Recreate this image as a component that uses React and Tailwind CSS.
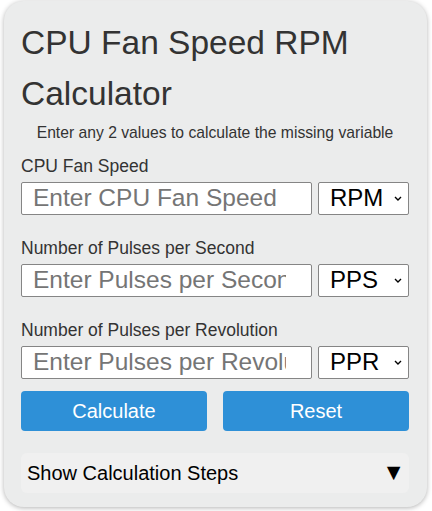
import { useState } from 'react';

const fields = [
  { id: 'speed', label: 'CPU Fan Speed', placeholder: 'Enter CPU Fan Speed', unit: 'RPM' },
  { id: 'pps', label: 'Number of Pulses per Second', placeholder: 'Enter Pulses per Second', unit: 'PPS' },
  { id: 'ppr', label: 'Number of Pulses per Revolution', placeholder: 'Enter Pulses per Revolution', unit: 'PPR' },
];

function Chevron() {
  return (
    <svg width="8" height="5" viewBox="0 0 8 5" className="pointer-events-none absolute right-[7px] top-[14px]">
      <path d="M1 1l3 3 3-3" fill="none" stroke="#000" strokeWidth="1.4" />
    </svg>
  );
}

function Field({ f, value, onChange }) {
  return (
    <div className="flex flex-col">
      <label className="text-[17.5px] leading-[20px] text-[#333]">{f.label}</label>
      <div className="mt-[6px] flex h-[33px] gap-[6px]">
        <input
          value={value}
          onChange={e => onChange(e.target.value)}
          placeholder={f.placeholder}
          className="block h-[33px] w-[291px] min-w-0 rounded-[2px] border border-[#858585] bg-white pl-[11px] pr-[25px] text-[24.5px] text-black outline-none placeholder:text-[#757575]"
        />
        <div className="relative flex-1">
          <select className="block h-[33px] w-full appearance-none rounded-[2px] border border-[#858585] bg-white py-0 pl-[11px] text-[24px] leading-[24px] text-black outline-none">
            <option>{f.unit}</option>
          </select>
          <Chevron />
        </div>
      </div>
    </div>
  );
}

export default function App() {
  const [vals, setVals] = useState({ speed: '', pps: '', ppr: '' });
  const [open, setOpen] = useState(false);

  return (
    <div className="min-h-[511px] bg-white font-['Liberation_Sans',Arial,sans-serif]">
      <div className="ml-[4px] mt-px h-[506px] w-[423px] rounded-[20px] bg-[#ebecec] pl-[17px] pr-[18px] pt-[16px] shadow-[0_1px_5px_rgba(0,0,0,0.3)]">
        <h1 className="text-[33.5px] leading-[51px] text-[#333]">CPU Fan Speed RPM Calculator</h1>
        <p className="mt-[5px] text-center text-[15.7px] leading-[18px] text-[#333]">
          Enter any 2 values to calculate the missing variable
        </p>

        <div className="mt-[13.5px] flex flex-col gap-[23px]">
          {fields.map(f => (
            <Field key={f.id} f={f} value={vals[f.id]} onChange={v => setVals(s => ({ ...s, [f.id]: v }))} />
          ))}
        </div>

        <div className="mt-[12px] flex gap-[16px]">
          <button className="h-[40px] flex-1 rounded-[4px] bg-[#2e90d7] text-[20px] text-white">Calculate</button>
          <button
            onClick={() => setVals({ speed: '', pps: '', ppr: '' })}
            className="h-[40px] flex-1 rounded-[4px] bg-[#2e90d7] text-[20px] text-white"
          >
            Reset
          </button>
        </div>

        <button
          onClick={() => setOpen(o => !o)}
          className="mt-[22px] flex h-[40px] w-full items-center justify-between rounded-[6px] bg-[#f0f0f0] pl-[6px] pr-[4px] text-[20px] text-black"
        >
          <span>Show Calculation Steps</span>
          <span className="text-[23px] leading-none">▼</span>
        </button>
      </div>
    </div>
  );
}
